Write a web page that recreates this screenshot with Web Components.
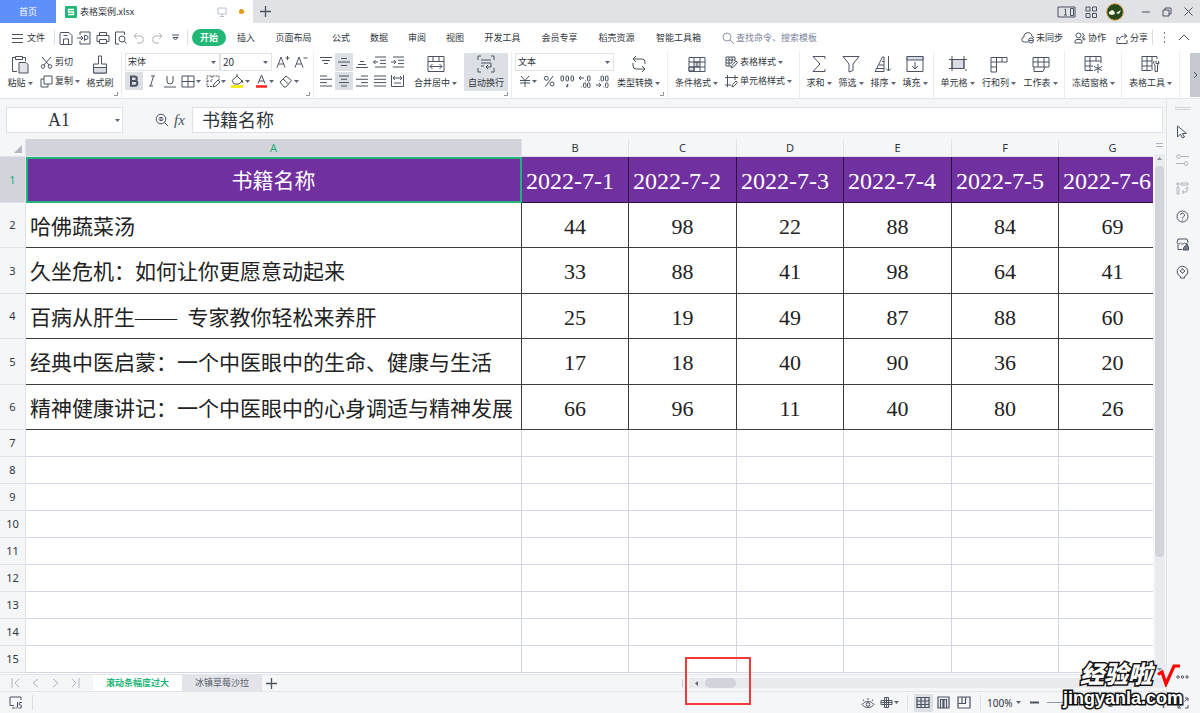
<!DOCTYPE html>
<html lang="zh-CN">
<head>
<meta charset="utf-8">
<title>表格案例.xlsx</title>
<style>
  html, body { margin: 0; height: 100%; }
  body { font: 9px/14px "Noto Sans CJK SC", "Noto Sans", sans-serif; color: #30353d; background: #f5f6f8; overflow: hidden; }
</style>
</head>
<body>
<wps-app></wps-app>
<script>
const ICONS = {
  caret: [5, 3, '<path d="M0 0h5L2.500 3z" fill="#5d6675" stroke="none"/>'],
  menu: [11, 10, '<path d="M0 1.500h11M0 5.500h11M0 9.500h11"/>'],
  save: [14, 14, '<path d="M1 3.500v9a1 1 0 0 0 1 1h10a1 1 0 0 0 1-1v-8L10 1.500H2a1 1 0 0 0-1 1zM4.500 4.500h4M4.500 13V8h5v5"/>'],
  pdf: [14, 14, '<path d="M3 4V1h10v12H3v-3M0 7h6M4 5l2 2-2 2M7.500 10V4.500H9a2 2 0 0 1 0 4H8"/>'],
  print: [14, 14, '<path d="M3.500 4.500v-3h7v3M3 10.500H1V4.500h12v6h-2M3.500 8.500h7v4h-7z"/>'],
  preview: [14, 14, '<path d="M5 13H1.500V1h9v3M12.500 12.500 10.500 10.500"/><circle cx="8" cy="8" r="3"/>'],
  undo: [12, 12, '<path d="M4 1 1 4l3 3M1 4h6a3.500 3.500 0 0 1 0 7H4"/>'],
  redo: [12, 12, '<path d="M8 1l3 3-3 3M11 4H5a3.500 3.500 0 0 0 0 7h3"/>'],
  more: [7, 7, '<path d="M0 1h7M1 3.500h5L3.500 6z"/>'],
  search: [12, 12, '<circle cx="5" cy="5" r="4"/><path d="M8 8l4 4"/>'],
  cloud: [14, 13, '<path d="M7 11H3.500a2.500 2.500 0 0 1-.5-5 4 4 0 0 1 8-.5A2.500 2.500 0 0 1 13 7"/><circle cx="10" cy="9.500" r="2.500"/><path d="M8 9.500h4"/>'],
  people: [12, 12, '<circle cx="4.500" cy="3.500" r="2.500"/><path d="M1 11V9.500a2 2 0 0 1 2-2h3a2 2 0 0 1 2 2V11zM8 1.500a2 2 0 0 1 0 4M8.500 7h3M10 5.500v3"/>'],
  share: [12, 12, '<path d="M3 5.500H1v6h10V8M3.500 8c0-3 2-4 7-4M8 1.500 10.800 4 8 6.500"/>'],
  dotsv: [3, 11, '<path d="M1 1h1M1 5.500h1M1 10h1" stroke-width="1.500"/>'],
  up: [12, 7, '<path d="M1 6l5-5 5 5"/>'],
  paste: [18, 19, '<path d="M6 16.500H1.500V2.500H4M12 2.500h2.500V6M4.500 1.500h7v3h-7z"/><path d="M8 7.500h7l2 2v8.500H8z" fill="#e2e5ea"/>'],
  cut: [13, 13, '<path d="M2 1l7 8M11 1L4 9"/><circle cx="3" cy="10.500" r="1.800"/><circle cx="10" cy="10.500" r="1.800"/>'],
  copy: [13, 13, '<path d="M4 1h8v8H4zM4 4H1v8h7V9"/>'],
  brush: [16, 19, '<path d="M6.500 1h3v8h5v9h-13V9h5z"/><path d="M1.500 12.500h13V18h-13z" fill="#d9dce2"/>'],
  aplus: [14, 14, '<path d="M1 12.500 5 2l4 10.500M2.500 9h5M9.500 3h4M11.500 1v4"/>'],
  aminus: [14, 14, '<path d="M1 12.500 5 2l4 10.500M2.500 9h5M9.500 3h4"/>'],
  bold: [12, 12, '<path d="M3 1.500h3.500a2.200 2.200 0 0 1 0 4.500H3zM3 6h4a2.300 2.300 0 0 1 0 4.700H3z" stroke-width="2"/>'],
  italic: [12, 12, '<path d="M5 1h4M3 11h4M7.500 1 4.500 11"/>'],
  underline: [12, 13, '<path d="M3 1v5a3 3 0 0 0 6 0V1M0 12h12"/>'],
  border: [14, 13, '<path d="M1 1h12v11H1zM1 6.500h12M7 1v11"/>'],
  cellstyle: [14, 13, '<path d="M6 11.500H1V1h12v4M1 6h5M6 1v4" stroke-dasharray="2 1"/><path d="M7 12l1-3 4-4 2 2-4 4z"/>'],
  fill: [14, 14, '<path d="M2 6.500 7 2l5 5-3 3H4zM7 2V0M12 6l1 3"/><path d="M1 12.500h12" stroke="#f6ec1c" stroke-width="3"/>'],
  color: [13, 14, '<path d="M3 9.500 6.500 1 10 9.500M4 7h5"/><path d="M1 12.500h11" stroke="#f22" stroke-width="2.500"/>'],
  eraser: [14, 13, '<path d="M1 7 7 1l5.500 4.500L7 12H5zM4 4l5.500 5"/>'],
  atop: [12, 12, '<path d="M0 1.500h12M2 4.500h8M4 7.500h4"/>'],
  amid: [12, 12, '<path d="M3 2.500h6M0 6h12M3 9.500h6"/>'],
  abot: [12, 12, '<path d="M4 5.500h4M2 8.500h8M0 11.500h12"/>'],
  outd: [13, 12, '<path d="M2 1h11M7 4.300h6M7 7.600h6M2 11h11M0.500 6H5M2.500 4l-2 2 2 2"/>'],
  ind: [13, 12, '<path d="M2 1h11M7 4.300h6M7 7.600h6M2 11h11M0 6h5M3 4l2 2-2 2"/>'],
  al: [12, 12, '<path d="M0 1h7M0 4.300h12M0 7.600h7M0 11h12"/>'],
  ac: [12, 12, '<path d="M1 1h10M3 4.300h6M1 7.600h10M3 11h6"/>'],
  ar: [12, 12, '<path d="M5 1h7M0 4.300h12M5 7.600h7M0 11h12"/>'],
  aj: [12, 12, '<path d="M0 1h12M0 4.300h12M0 7.600h12M0 11h12"/>'],
  dist: [13, 12, '<path d="M.5 0v11.500h12V0M3 8h7M2 3h9M4 1 2 3l2 2M9 1l2 2-2 2"/>'],
  merge: [18, 18, '<path d="M1 1.500h16v15H1zM1 6.500h16M6 1.500v5M12 1.500v5M3 11.500h12M5.500 9 3 11.500 5.500 14M12.500 9l2.500 2.500-2.500 2.500"/>'],
  wrap: [18, 18, '<path d="M4 1H1v4M14 1h3v4M1 13v4h3M17 13v4h-3M4 5h10M4 8h10M4 11h3M14 8v4H9M11 10l-2 2 2 2"/>'],
  yen: [12, 12, '<path d="M2 1l4 4.500L10 1M1 5.500h10M1 8h10M6 5.500V12"/>'],
  pct: [12, 12, '<circle cx="3.300" cy="3.300" r="2"/><circle cx="9" cy="9" r="2"/><path d="M10 1 2.500 11.500"/>'],
  thou: [14, 13, '<rect x="1" y="1" width="2.500" height="5" rx="1"/><rect x="6" y="1" width="2.500" height="5" rx="1"/><rect x="11" y="1" width="2.500" height="5" rx="1"/><path d="M7.500 9v2l-1 1" stroke-width="1.500"/>'],
  decp: [13, 13, '<path d="M6 3H1M3 1 1 3l2 2M7.500 5.500v.8M3.500 11.500v.8"/><rect x="9.500" y="1" width="2.500" height="5" rx="1"/><rect x="5.500" y="8" width="2.500" height="4.500" rx="1"/><rect x="9.500" y="8" width="2.500" height="4.500" rx="1"/>'],
  decm: [13, 13, '<path d="M0 10h5M3 8l2 2-2 2M3 5.500v.8M7.500 11.500v.8"/><rect x="5" y="1" width="2.500" height="5" rx="1"/><rect x="9.500" y="1" width="2.500" height="5" rx="1"/><rect x="9.500" y="8" width="2.500" height="4.500" rx="1"/>'],
  conv: [18, 18, '<path d="M6 1 3 4l3 3M3 4h9a3 3 0 0 1 3 3v2M3 8v3a3 3 0 0 0 3 3h9M12 11l3 3-3 3"/>'],
  cond: [18, 17, '<path d="M1 1.500h16v14H1z"/><path d="M6 6h6v5H6zM1 11h5v4H1z" fill="#d9dce2"/><path d="M1 6h16M1 11h16M6 1.500V6M12 1.500V6M6 11v4.500M12 11v4.500M9 6v5"/>'],
  tstyle: [13, 13, '<path d="M6 10H1V1h9v4M1 4h9M1 7h6M4 1v9M7 1v6"/><path d="M6 12l1-2.500L11 5l1.500 1.500L8.500 11z"/>'],
  cstyle: [13, 13, '<path d="M2.500 0v12M0 2.500h13M10 0v5M0 10h6M7 12l.5-2.500L11 6l1.500 1.500L9 11z"/>'],
  sum: [16, 18, '<path d="M14 4V1.500H2L9 9l-7 7.500h12V14"/>'],
  filter: [18, 18, '<path d="M1 1.500h16L11 9v6.500L7 17V9z"/>'],
  sort: [18, 18, '<path d="M10 16.500H1L8.500 2H10zM8 6.500h2M5 10h5M3 13.500h7M14.500 1v15M12 13.500l2.500 2.500 2.500-2.500"/>'],
  down: [18, 18, '<path d="M1 1.500h16v15H1z"/><path d="M1 1.500h16v3.500H1z" fill="#d9dce2"/><path d="M9 7v7M6 11l3 3 3-3"/>'],
  cell: [18, 16, '<path d="M3 3.500h12v9H3z" fill="#d9dce2"/><path d="M3 0v15M15 0v13M0 3.500h18M0 12.500h15M16 14h2"/>'],
  rowcol: [18, 17, '<path d="M1 1.500h16V6H6.500v10H1zM1 6h5.500V1.500M12 1.500V6M1 11h5.500"/>'],
  sheet: [18, 17, '<path d="M1 1.500h16V11H1zM1 6h16M6 1.500V11M12 1.500V11M2 11v4.500h9l2-4.500"/>'],
  freeze: [19, 18, '<path d="M9 15.500H1V1.500h16V8M1 6h16M6 1.500v14M12 1.500V6M1 11h8M14 9v9M10 11.500l8 4M18 11.500l-8 4"/>'],
  tools: [19, 18, '<path d="M10 15.500H1V1.500h15V4M1 6h10M1 11h10M6 1.500v14M11 1.500v14M13 6a3 3 0 0 0 1 4v6.500h2.500V10a3 3 0 0 0 1-4v2.500h-2.500V5.500"/>'],
  right: [5, 8, '<path d="M1 1l3 3-3 3"/>'],
  corner: [4, 4, '<path d="M0 3.500h3.500V0"/>'],
  zoomin: [14, 14, '<circle cx="6" cy="6" r="4.800"/><path d="M9.500 9.500 13 13M3.500 6h5M4.500 4.500h3M4.500 7.500h3"/>'],
  cursor: [12, 14, '<path d="M1.500 1v11l3-3 2 4 2-1-2-3.500h4z"/>'],
  sliders: [13, 12, '<circle cx="2.500" cy="2.500" r="1.800"/><path d="M5 2.500h8M0 9.500h8"/><circle cx="10" cy="9.500" r="1.800"/>'],
  pivot: [13, 13, '<path d="M1 1h2v2H1zM5 1h7v2H5zM1 5h2v7H1zM11 5v5H6M8 8l-2 2 2 2M9.500 6.500 11 5l1.500 1.500"/>'],
  help: [13, 13, '<circle cx="6.500" cy="6.500" r="5.500"/><path d="M4.500 5a2 2 0 1 1 2.800 2c-.8.400-.8.800-.8 1.500M6.500 9.500v1"/>'],
  shop: [13, 13, '<path d="M6 11.500H2v-5M2 1h9l1 3.500c-1 2-3 1.500-3.500.5-1 1.500-3 1.500-4 0C3.500 6.500 1 6 1 4.500z"/><path d="M7 12l1-3 3-3 1.500 3v3z" fill="#777d88"/>'],
  bulb: [13, 14, '<path d="M4.500 11.500a5.300 5.300 0 1 1 4 0V13h-4z"/><path d="M6.500 3.500l1 1.500 1.500 1-1.500 1-1 1.500-1-1.500L4 6l1.500-1z"/>'],
  dots: [13, 4, '<circle cx="2" cy="2" r="1.200"/><circle cx="6.500" cy="2" r="1.200"/><circle cx="11" cy="2" r="1.200"/>'],
  first: [9, 10, '<path d="M1 0v10M8 1 4 5l4 4"/>'],
  prev: [7, 10, '<path d="M6 1 1 5l5 4"/>'],
  next: [7, 10, '<path d="M1 1l5 4-5 4"/>'],
  last: [9, 10, '<path d="M8 0v10M1 1l4 4-4 4"/>'],
  plus: [11, 11, '<path d="M5.500 0v11M0 5.500h11" stroke-width="1.300"/>'],
  js: [14, 13, '<path d="M5 9.500H1V1h11v3M3 12h3M8.500 6v5c0 1-1 1-2 1M13 6.500h-2.500l-.5 2 2.500 1-.5 2.500H9.500"/>'],
  eye: [14, 12, '<path d="M1 7.500c3-4 9-4 12 0-3 4-9 4-12 0zM7 3V1M3 4 2 2.500M11 4l1-1.500"/><circle cx="7" cy="7.500" r="1.800"/>'],
  cross: [13, 13, '<path d="M4.500 1.500h4v3h3.500v4H8.500v3h-4v-3H1v-4h3.500zM4.500 4.500h4v4h-4zM6.500 1.500v10M1 6.500h11"/>'],
  vgrid: [14, 13, '<path d="M1 1.500h12v10H1zM1 5h12M1 8.500h12M5 1.500v10M9 1.500v10" stroke-width="1.200"/>'],
  vpage: [13, 13, '<path d="M1 1h11v11H1zM3.500 12V3.500H6V12M9.500 12V3.500H7V12" stroke-width="1.200"/>'],
  vbreak: [14, 13, '<path d="M1 1h12v11H1zM1 7.500h7.500V1M5 1v6.500" stroke-width="1.200"/>'],
  minus: [9, 3, '<path d="M0 1.500h9" stroke-width="2"/>'],
  expand: [12, 12, '<path d="M8 1h3v3M11 1 7.500 4.500M4 1H1v3M1 8v3h3M1 11l3.500-3.500M11 8v3H8"/>'],
  monitor: [10, 10, '<path d="M1 1h8v6H1zM3 9.500h4M5 7v2"/>'],
  device: [19, 12, '<path d="M1 1h17v10H1zM13.500 2.500h3v7h-3zM7.500 3.500l1-.5v6M7 9h3"/>'],
  apps: [12, 12, '<path d="M1 1h4v4H1zM7.500 1h4v4h-4zM1 7.500h4v4H1zM7.500 7.500h4v4h-4z"/>'],
  min: [8, 2, '<path d="M0 1h8"/>'],
  restore: [10, 10, '<path d="M3 3V1h6v6H7M1 3h6v6H1z"/>'],
  close: [9, 9, '<path d="M0.500 .5l8 8M8.500 .5l-8 8"/>'],
  logo: [12, 12, '<rect width="12" height="12" rx="1" fill="#1fb877" stroke="none"/><path d="M9 3.500H3.500V6h5v2.500H3" stroke="#fff" stroke-width="1.300"/>'],
  avatar: [18, 18, '<circle cx="9" cy="9" r="8.300" fill="#274a1c" stroke="#d59a45"/><path d="M3 9l3-2 2 1 1 3-3 1-3-1zM10 10l5-3-2 4z" fill="#f4f4ea" stroke="none"/>'],
  tri: [5, 3, '<path d="M0 3h5L2.500 0z" fill="#8c93a0" stroke="none"/>'],
  trid: [5, 3, '<path d="M0 0h5L2.500 3z" fill="#8c93a0" stroke="none"/>'],
  tril: [3, 5, '<path d="M3 0v5L0 2.500z" fill="#5d6675" stroke="none"/>'],
  all: [8, 8, '<path d="M8 0v8H0z" fill="#b4b7bd" stroke="none"/>'],
  check: [24, 24, '<path d="M1 11.500 5 9 9 21 17 3h6" stroke="#f00" stroke-width="3.200"/>']
};

const define = (name, html, setup) => {
  const template = document.createElement('template');
  template.innerHTML = html;
  customElements.define(name, class extends HTMLElement {
    constructor() {
      super();
      this.attachShadow({ mode: 'open' }).append(template.content.cloneNode(true));
    }
    connectedCallback() { if (setup) setup(this, this.shadowRoot); }
  });
};

define('ui-icon', `<style>
  :host { display: inline-flex; flex: none; color: #4b5260; }
  svg { display: block; fill: none; stroke: currentColor; stroke-width: 1; }
</style><span></span>`, (el, root) => {
  const [w, h, body] = ICONS[el.getAttribute('name')];
  root.querySelector('span').innerHTML = `<svg width="${w}" height="${h}" viewBox="0 0 ${w} ${h}" aria-hidden="true">${body}</svg>`;
});

define('ui-sep', `<style>:host { display: block; flex: none; width: 1px; height: 15px; background: #dcdee3; }</style>`);

define('tool-button', `<style>
  :host { display: block; flex: none; }
  button { all: unset; box-sizing: border-box; display: flex; align-items: center; justify-content: center; width: 100%; height: 18px; gap: 1px; white-space: nowrap; border-radius: 1px; }
  .label { display: flex; align-items: center; gap: 2px; }
  :host([row]) button { justify-content: flex-start; gap: 2px; padding-left: 3px; }
  :host([big]) button { flex-direction: column; height: 38px; gap: 0; }
  :host([big]) .pic { height: 22px; display: flex; align-items: center; }
  :host([big]) .label { height: 16px; }
  :host([on]) button { background: #dce0e5; }
  .pic { display: flex; justify-content: center; }
  :host([row]) .pic { width: 13px; }
  .caret { display: none; }
  :host([caret]) .caret { display: flex; }
  :host([pale]) ui-icon { color: #b0b4bd; }
</style><button type="button"><span class="pic"></span><span class="label"><slot></slot><ui-icon class="caret" name="caret"></ui-icon></span></button>`,
(el, root) => {
  const icon = document.createElement('ui-icon');
  icon.setAttribute('name', el.getAttribute('icon'));
  root.querySelector('.pic').replaceChildren(icon);
  if (el.hasAttribute('w')) el.style.width = el.getAttribute('w') + 'px';
  if (el.title) root.querySelector('button').setAttribute('aria-label', el.title);
});

define('pick-list', `<style>
  :host { display: grid; flex: none; align-items: center; box-sizing: border-box; height: 18px; border: 1px solid #dfe2e6; background: #fff; }
  select { all: unset; grid-area: 1/1; font: inherit; padding-left: 2px; }
  :host([size]) select { font-size: 10px; }
  ui-icon { grid-area: 1/1; justify-self: end; margin-right: 3px; pointer-events: none; }
</style><select><option></option></select><ui-icon name="caret"></ui-icon>`, (el, root) => {
  el.style.width = el.getAttribute('w') + 'px';
  root.querySelector('option').textContent = el.getAttribute('value');
  root.querySelector('select').setAttribute('aria-label', el.getAttribute('label'));
});

define('ribbon-group', `<style>
  :host { display: flex; flex: none; box-sizing: border-box; position: relative; border-right: 1px solid #ebedf0; padding: 1px 0 0 3px; }
  .corner { display: none; position: absolute; right: 3px; bottom: 2px; color: #8d929c; }
  :host([corner]) .corner { display: flex; }
</style><slot></slot><ui-icon class="corner" name="corner"></ui-icon>`, el => { el.style.width = el.getAttribute('w') + 'px'; });

define('title-bar', `<style>
  :host { display: flex; flex: none; height: 23px; background: #e1e2e6; align-items: center; }
  a { display: flex; height: 100%; align-items: center; text-decoration: none; color: inherit; box-sizing: border-box; }
  .home { width: 56px; justify-content: center; color: #fff; background: #5f8ffa; }
  .doc { width: 197px; background: #fff; padding: 0 9px; gap: 3px; }
  .doc span { flex: 1; }
  .dot { width: 5px; height: 5px; border-radius: 50%; background: #e5980c; margin-left: 9px; }
  .doc .mon { color: #b8bfce; }
  .win { margin-left: auto; display: flex; align-items: center; gap: 8px; padding-right: 6px; }
</style>
<a class="home" href="#home">首页</a>
<a class="doc" href="#doc"><ui-icon name="logo"></ui-icon><span>表格案例.xlsx</span><ui-icon class="mon" name="monitor"></ui-icon><i class="dot"></i></a>
<tool-button icon="plus" w="26" title="新建"></tool-button>
<div class="win"><tool-button icon="device" w="19" title="窗口"></tool-button><tool-button icon="apps" w="14" title="应用"></tool-button><tool-button icon="avatar" w="18" title="账号"></tool-button><ui-sep></ui-sep><tool-button icon="min" w="10" title="最小化"></tool-button><tool-button icon="restore" w="16" title="还原"></tool-button><tool-button icon="close" w="11" title="关闭"></tool-button></div>`);

define('menu-bar', `<style>
  :host { display: flex; flex: none; height: 29px; align-items: center; background: #fff; }
  nav { display: flex; margin-left: 1px; }
  button { all: unset; white-space: nowrap; }
  .file { display: flex; align-items: center; gap: 4px; padding-left: 12px; width: 42px; }
  nav button { width: 38px; text-align: center; }
  nav .l4 { width: 57px; } nav .l5 { width: 67px; }
  .start { width: 34px; height: 17px; line-height: 17px; border-radius: 9px; background: #20b777; color: #fff; font-weight: 700; text-align: center; margin-left: 4px; }
  .quick { display: flex; padding: 0 1px 0 2px; }
  label { display: flex; align-items: center; gap: 2px; margin-left: 10px; }
  label ui-icon { color: #8f98b0; }
  input { all: unset; width: 110px; }
  input::placeholder { color: #7a849c; opacity: 1; }
  .end { margin-left: auto; display: flex; align-items: center; padding-right: 9px; }
</style>
<button class="file"><ui-icon name="menu"></ui-icon>文件</button><ui-sep></ui-sep>
<div class="quick"><tool-button icon="save" w="18" title="保存"></tool-button><tool-button icon="pdf" w="19" title="输出为PDF"></tool-button><tool-button icon="print" w="18" title="打印"></tool-button><tool-button icon="preview" w="18" title="打印预览"></tool-button><tool-button icon="undo" w="18" pale title="撤销"></tool-button><tool-button icon="redo" w="18" pale title="恢复"></tool-button><tool-button icon="more" w="20" title="更多"></tool-button></div>
<ui-sep></ui-sep><button class="start">开始</button>
<nav><button>插入</button><button class="l4">页面布局</button><button>公式</button><button>数据</button><button>审阅</button><button>视图</button><button class="l4">开发工具</button><button class="l4">会员专享</button><button class="l4">稻壳资源</button><button class="l5">智能工具箱</button></nav>
<label><ui-icon name="search"></ui-icon><input placeholder="查找命令、搜索模板" aria-label="查找命令"></label>
<div class="end"><tool-button row icon="cloud" w="52">未同步</tool-button><tool-button row icon="people" w="42">协作</tool-button><tool-button row icon="share" w="40">分享</tool-button><ui-sep></ui-sep><tool-button icon="dotsv" w="24" title="更多"></tool-button><tool-button icon="up" w="14" title="收起"></tool-button></div>`);

define('ribbon-bar', `<style>
  :host { display: flex; flex: none; height: 46px; background: #fff; border-bottom: 1px solid #e3e5e9; overflow: hidden; }
  .col { display: flex; flex-direction: column; gap: 1px; }
  .row { display: flex; }
  .gap { margin-left: 2px; }
  .scroll { all: unset; display: flex; align-items: center; justify-content: center; flex: none; width: 10px; height: 44px; margin: 1px 0 0 auto; background: #c6c9cf; }
</style>
<ribbon-group w="122" corner><tool-button big caret icon="paste" w="34">粘贴</tool-button><div class="col"><tool-button row icon="cut" w="46">剪切</tool-button><tool-button row caret icon="copy" w="46">复制</tool-button></div><tool-button big icon="brush" w="34">格式刷</tool-button></ribbon-group>
<ribbon-group w="192" corner><div class="col"><div class="row"><pick-list w="95" value="宋体" label="字体"></pick-list><pick-list size w="52" value="20" label="字号"></pick-list><tool-button class="gap" icon="aplus" w="18" title="增大字号"></tool-button><tool-button icon="aminus" w="18" title="减小字号"></tool-button></div>
<div class="row"><tool-button on icon="bold" w="18" title="加粗"></tool-button><tool-button icon="italic" w="18" title="倾斜"></tool-button><tool-button icon="underline" w="18" title="下划线"></tool-button><tool-button caret icon="border" w="24" title="边框"></tool-button><tool-button caret icon="cellstyle" w="25" title="样式"></tool-button><tool-button caret icon="fill" w="24" title="填充色"></tool-button><tool-button caret icon="color" w="24" title="字体颜色"></tool-button><tool-button caret icon="eraser" w="25" title="清除"></tool-button></div></div></ribbon-group>
<ribbon-group w="198" corner><div class="col"><div class="row"><tool-button icon="atop" w="18" title="顶端对齐"></tool-button><tool-button on icon="amid" w="18" title="垂直居中"></tool-button><tool-button icon="abot" w="18" title="底端对齐"></tool-button><tool-button icon="outd" w="18" title="减少缩进"></tool-button><tool-button icon="ind" w="18" title="增加缩进"></tool-button></div>
<div class="row"><tool-button icon="al" w="18" title="左对齐"></tool-button><tool-button on icon="ac" w="18" title="水平居中"></tool-button><tool-button icon="ar" w="18" title="右对齐"></tool-button><tool-button icon="aj" w="18" title="两端对齐"></tool-button><tool-button icon="dist" w="18" title="分散对齐"></tool-button></div></div><tool-button big caret icon="merge" w="57">合并居中</tool-button><tool-button big on icon="wrap" w="44">自动换行</tool-button></ribbon-group>
<ribbon-group w="156" corner><div class="col"><pick-list w="99" value="文本" label="数字格式"></pick-list>
<div class="row"><tool-button caret icon="yen" w="25" title="货币"></tool-button><tool-button icon="pct" w="18" title="百分比"></tool-button><tool-button icon="thou" w="18" title="千位分隔"></tool-button><tool-button icon="decp" w="18" title="增加小数"></tool-button><tool-button icon="decm" w="18" title="减少小数"></tool-button></div></div><tool-button big caret icon="conv" w="49">类型转换</tool-button></ribbon-group>
<ribbon-group w="132"><tool-button big caret icon="cond" w="51">条件格式</tool-button><div class="col"><tool-button row caret icon="tstyle" w="76">表格样式</tool-button><tool-button row caret icon="cstyle" w="76">单元格样式</tool-button></div></ribbon-group>
<ribbon-group w="134"><tool-button big caret icon="sum" w="32">求和</tool-button><tool-button big caret icon="filter" w="32">筛选</tool-button><tool-button big caret icon="sort" w="32">排序</tool-button><tool-button big caret icon="down" w="32">填充</tool-button></ribbon-group>
<ribbon-group w="131"><tool-button big caret icon="cell" w="41">单元格</tool-button><tool-button big caret icon="rowcol" w="42">行和列</tool-button><tool-button big caret icon="sheet" w="41">工作表</tool-button></ribbon-group>
<ribbon-group w="57"><tool-button big caret icon="freeze" w="51">冻结窗格</tool-button></ribbon-group>
<ribbon-group w="58"><tool-button big caret icon="tools" w="51">表格工具</tool-button></ribbon-group>
<button class="scroll" aria-label="向右滚动"><ui-icon name="right"></ui-icon></button>`);

define('formula-bar', `<style>
  :host { display: flex; flex: none; height: 26px; padding: 8px 3px 6px 6px; align-items: stretch; font-size: 18px; }
  .name { display: grid; width: 117px; box-sizing: border-box; border: 1px solid #dfe1e6; background: #fff; align-items: center; }
  .name input { all: unset; grid-area: 1/1; width: 104px; text-align: center; font-family: "Liberation Serif", serif; }
  .name ui-icon { grid-area: 1/1; justify-self: end; margin-right: 2px; }
  .tools { display: flex; align-items: center; width: 69px; box-sizing: border-box; padding-left: 32px; gap: 5px; }
  i { font: italic 15px/18px "Liberation Serif", serif; color: #4b5260; }
  .formula { all: unset; box-sizing: border-box; flex: 1; min-width: 0; border: 1px solid #dfe1e6; background: #fff; padding: 0 0 3px 9px; }
</style>
<div class="name"><input value="A1" aria-label="名称框"><ui-icon name="caret"></ui-icon></div>
<div class="tools"><ui-icon name="zoomin"></ui-icon><i>fx</i></div>
<input class="formula" value="书籍名称" aria-label="编辑栏">`);

const COLUMNS = ['A', 'B', 'C', 'D', 'E', 'F', 'G'];
const WIDTHS = [496, 107, 108, 107, 108, 107, 108];
const DATA = [
  ['书籍名称', '2022-7-1', '2022-7-2', '2022-7-3', '2022-7-4', '2022-7-5', '2022-7-6'],
  ['哈佛蔬菜汤', 44, 98, 22, 88, 84, 69],
  ['久坐危机：如何让你更愿意动起来', 33, 88, 41, 98, 64, 41],
  ['百病从肝生——\u2002专家教你轻松来养肝', 25, 19, 49, 87, 88, 60],
  ['经典中医启蒙：一个中医眼中的生命、健康与生活', 17, 18, 40, 90, 36, 20],
  ['精神健康讲记：一个中医眼中的心身调适与精神发展', 66, 96, 11, 40, 80, 26]
];

define('data-sheet', `<style>
  :host { display: block; flex: 1; min-width: 0; overflow: hidden; background: #fff; }
  table { table-layout: fixed; width: 1167px; border-collapse: separate; border-spacing: 0; }
  th, td { box-sizing: border-box; padding: 0; white-space: nowrap; overflow: hidden; border: 0 solid #d3d7e5; border-width: 0 1px 1px 0; }
  th { font: 11px/16px "Noto Sans", sans-serif; background: #f5f6f8; border-color: #dfe2e9; }
  thead th { height: 18px; }
  thead th:first-child { text-align: right; }
  thead ui-icon { margin: 0 3px 0 0; vertical-align: middle; }
  .on { background: #d1d4da; color: #1fae77; }
  tbody tr { height: 27px; }
  tr.data:nth-child(odd) { height: 46px; }
  tr.data:nth-child(even) { height: 45px; }
  .data td { border-color: #3c3c3c; text-align: center; padding-top: 3px; font: 22px/26px "Liberation Serif", serif; color: #222; }
  .data td.text { text-align: left; padding-left: 4px; font: 21px/26px "Liberation Serif", "Noto Sans CJK SC", serif; }
  .data.head td { background: #7030a0; color: #fff; border-color: #2c1440; font-size: 24px; text-align: left; padding-left: 4px; }
  .data.head td.text { text-align: center; padding-left: 0; font-size: 21px; box-shadow: inset 2px 2px #20b37a, inset -1px -1px #20b37a; border-color: #20b37a; }
</style><table><colgroup></colgroup><thead></thead><tbody></tbody></table>`, (el, root) => {
  root.querySelector('colgroup').innerHTML = [26, ...WIDTHS].map(w => `<col style="width:${w}px">`).join('');
  root.querySelector('thead').innerHTML = '<tr><th><ui-icon name="all"></ui-icon></th>' + COLUMNS.map((c, i) => `<th class="${i ? '' : 'on'}">${c}</th>`).join('') + '</tr>';
  let rows = '';
  for (let r = 0; r < 15; r++) {
    const data = DATA[r];
    rows += `<tr class="${data ? 'data' : ''} ${r ? '' : 'head'}"><th class="${r ? '' : 'on'}">${r + 1}</th>` +
      COLUMNS.map((c, i) => `<td class="${i ? '' : 'text'}">${data ? data[i] : ''}</td>`).join('') + '</tr>';
  }
  root.querySelector('tbody').innerHTML = rows;
});

define('v-scroll', `<style>
  :host { display: flex; flex-direction: column; flex: none; width: 13px; align-items: center; box-sizing: border-box; }
  .split { width: 7px; height: 2px; border: solid #aab3c8; border-width: 1px 0; margin: 4px 0 7px; }
  .track { flex: 1; width: 10px; background: #e9ebef; display: flex; flex-direction: column; align-items: center; padding: 3px 0; }
  .thumb { width: 9px; min-height: 0; margin-top: 6px; border-radius: 4px; background: #d1d4da; flex: 0 1 391px; }
  .end { margin-top: auto; }
</style><div class="split"></div><div class="track"><ui-icon name="tri"></ui-icon><div class="thumb"></div><ui-icon class="end" name="trid"></ui-icon></div>`);

define('sheet-tabs', `<style>
  :host { display: flex; flex: none; height: 18px; align-items: center; border: solid #e3e5ea; border-width: 1px 0; box-sizing: border-box; }
  .nav { display: flex; width: 93px; box-sizing: border-box; padding-left: 6px; }
  a { height: 16px; line-height: 16px; box-sizing: border-box; text-align: center; text-decoration: none; color: #555c6a; background: #e3e4e9; width: 80px; }
  a.on { width: 89px; background: #fff; color: #1fb577; font-weight: 700; }
  .h { margin-left: auto; display: flex; align-items: center; width: 42%; max-width: 484px; }
  .grip { width: 2px; height: 8px; border: solid #c3c7d0; border-width: 0 1px; margin-right: 3px; }
  .track { flex: 1; display: flex; align-items: center; height: 10px; background: #e8eaee; padding-left: 6px; gap: 7px; }
  .thumb { width: 31px; height: 10px; border-radius: 5px; background: #d1d4da; }
</style>
<div class="nav"><tool-button icon="first" w="20" pale title="第一张"></tool-button><tool-button icon="prev" w="20" pale title="上一张"></tool-button><tool-button icon="next" w="20" pale title="下一张"></tool-button><tool-button icon="last" w="19" pale title="最后一张"></tool-button></div>
<a class="on" href="#s1">滚动条幅度过大</a><a href="#s2">冰镇草莓沙拉</a><tool-button icon="plus" w="19" title="新建工作表"></tool-button>
<div class="h"><div class="grip"></div><div class="track"><ui-icon name="tril"></ui-icon><div class="thumb"></div></div></div>`);

define('side-panel', `<style>
  :host { display: flex; flex-direction: column; flex: none; width: 34px; box-sizing: border-box; border-left: 1px solid #e1e3e8; align-items: center; gap: 10px; padding: 8px 2px 6px 0; }
  .grip { width: 15px; height: 1px; border: solid #cfd2d9; border-width: 1px 0; margin-bottom: 3px; }
  .end { margin-top: auto; }
</style><div class="grip"></div><tool-button icon="cursor" w="20" title="选择"></tool-button><tool-button icon="sliders" pale w="20" title="属性"></tool-button><tool-button icon="pivot" pale w="20" title="透视表"></tool-button><tool-button icon="help" w="20" title="帮助"></tool-button><tool-button icon="shop" w="20" title="素材"></tool-button><tool-button icon="bulb" w="20" title="灵感"></tool-button><tool-button class="end" icon="dots" w="20" title="更多"></tool-button>`);

define('status-bar', `<style>
  :host { display: flex; flex: none; height: 21px; align-items: center; font-size: 10px; }
  .end { margin-left: auto; display: flex; align-items: center; gap: 1px; padding-right: 4px; }
  .view { display: flex; align-items: center; gap: 1px; padding: 0 5px; }
  .zoom { all: unset; display: flex; align-items: center; gap: 4px; padding: 0 8px 0 5px; width: 34px; font-family: "Noto Sans", sans-serif; }
  input { appearance: none; width: 106px; height: 1px; background: #8d94a3; margin: 0 4px 0 6px; }
  input::-webkit-slider-thumb { appearance: none; width: 5px; height: 9px; background: #5d6675; border-radius: 2px; }
</style>
<tool-button icon="js" w="32" title="宏"></tool-button><ui-sep></ui-sep>
<div class="end"><tool-button icon="eye" w="17" title="护眼"></tool-button><tool-button caret icon="cross" w="22" title="阅读"></tool-button><ui-sep style="margin-left:6px"></ui-sep><div class="view"><tool-button on icon="vgrid" w="19" title="普通视图"></tool-button><tool-button icon="vpage" w="19" title="页面布局"></tool-button><tool-button icon="vbreak" w="20" title="分页预览"></tool-button></div><ui-sep></ui-sep><button class="zoom">100%<ui-icon name="caret"></ui-icon></button><tool-button icon="minus" w="10" title="缩小"></tool-button><input type="range" value="60" aria-label="缩放"><tool-button icon="plus" w="11" title="放大"></tool-button><tool-button icon="expand" w="26" title="全屏"></tool-button></div>`);

define('site-mark', `<style>
  :host { display: block; color: #fff; -webkit-text-stroke: 3px #111; paint-order: stroke fill; }
  .top { display: flex; align-items: center; height: 27px; padding-left: 17px; gap: 5px; font: italic 900 24px/27px "Liberation Sans", "Noto Sans CJK SC", sans-serif; }
  .site { font: bold 18px/20px "Liberation Sans", sans-serif; }
</style><div class="top"><span>经验啦</span><ui-icon name="check"></ui-icon></div><div class="site">jingyanla.com</div>`);

define('wps-app', `<style>
  :host { display: flex; flex-direction: column; height: 100vh; position: relative; }
  .body { display: flex; flex: 1; min-height: 0; }
  main { display: flex; flex-direction: column; flex: 1; min-width: 0; }
  .grid { display: flex; flex: 1; min-height: 0; }
  .frame { position: absolute; left: 685px; bottom: 8px; width: 66px; height: 48px; box-sizing: border-box; border: 2px solid #f23a3a; }
  site-mark { position: absolute; right: 17px; bottom: 5px; }
</style>
<title-bar></title-bar><menu-bar></menu-bar><ribbon-bar></ribbon-bar>
<div class="body"><main><formula-bar></formula-bar><div class="grid"><data-sheet></data-sheet><v-scroll></v-scroll></div><sheet-tabs></sheet-tabs></main><side-panel></side-panel></div>
<status-bar></status-bar><div class="frame"></div><site-mark></site-mark>`);
</script>
</body>
</html>
